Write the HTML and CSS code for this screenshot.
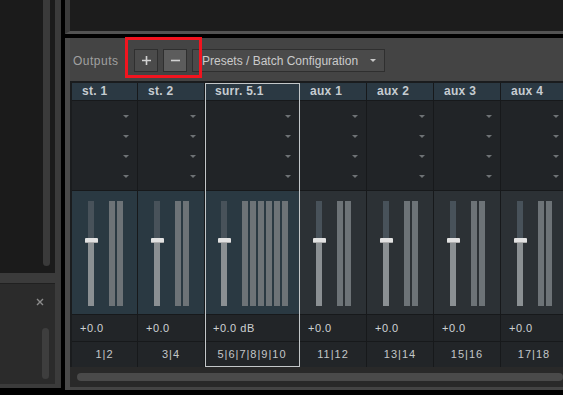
FILE: index.html
```html
<!DOCTYPE html>
<html lang="en">
<head>
    <meta charset="UTF-8">
    <meta name="viewport" content="width=device-width, initial-scale=1.0">
    <title>Outputs</title>
    <link rel="stylesheet" href="styles.css">
</head>
<body>
    <div class="app">
        <!-- Left side panels -->
        <div class="sidebar">
            <div class="side-top">
                <div class="vscroll"></div>
            </div>
            <div class="side-bottom">
                <svg class="close" viewBox="0 0 8 8">
                    <path d="M1 1L7 7M7 1L1 7" stroke="#8c8c8c" stroke-width="1.4" fill="none"/>
                </svg>
                <div class="vscroll"></div>
            </div>
        </div>

        <div class="main">
            <div class="top-pane"></div>

            <!-- Outputs section -->
            <div class="outputs-panel">
                <div class="toolbar">
                    <span class="label">Outputs</span>
                    <div class="btn-group">
                        <button class="btn" title="Add">
                            <svg viewBox="0 0 9 9"><path d="M0 4.5H9M4.5 0V9" stroke="#d2d2d2" stroke-width="1.6"/></svg>
                        </button>
                        <button class="btn active" title="Remove">
                            <svg viewBox="0 0 9 9"><path d="M0 4.5H9" stroke="#d2d2d2" stroke-width="1.6"/></svg>
                        </button>
                    </div>
                    <button class="dropdown">Presets / Batch Configuration <span class="caret"></span></button>
                </div>

                <div class="channels" id="channels"></div>

                <div class="hscroll-area">
                    <div class="hscroll"></div>
                </div>
            </div>
        </div>
    </div>

    <script>
        // Output channel strips
        const channels = [
            { name: "st. 1", value: "+0.0", ports: "1|2", meters: 2 },
            { name: "st. 2", value: "+0.0", ports: "3|4", meters: 2 },
            { name: "surr. 5.1", value: "+0.0 dB", ports: "5|6|7|8|9|10", meters: 6, type: "surround" },
            { name: "aux 1", value: "+0.0", ports: "11|12", meters: 2, type: "aux" },
            { name: "aux 2", value: "+0.0", ports: "13|14", meters: 2, type: "aux" },
            { name: "aux 3", value: "+0.0", ports: "15|16", meters: 2, type: "aux" },
            { name: "aux 4", value: "+0.0", ports: "17|18", meters: 2, type: "aux" }
        ];

        const list = document.getElementById("channels");
        channels.forEach(ch => {
            const col = document.createElement("div");
            col.className = "col" + (ch.type ? " " + ch.type : "");
            const routes = '<div class="route"><span class="arrow"></span></div>'.repeat(4);
            const meters = '<div class="meter"></div>'.repeat(ch.meters);
            col.innerHTML = `
                <div class="head">${ch.name}</div>
                <div class="routes">${routes}</div>
                <div class="fader-cell">
                    <div class="fader">
                        <div class="upper"></div>
                        <div class="knob"></div>
                        <div class="lower"></div>
                    </div>
                    <div class="meters">${meters}</div>
                </div>
                <div class="value">${ch.value}</div>
                <div class="ports">${ch.ports}</div>
            `;
            list.appendChild(col);
        });
    </script>
</body>
</html>
```

FILE: styles.css
```css
* {
    box-sizing: border-box;
}
body {
    margin: 0;
    width: 563px;
    height: 395px;
    overflow: hidden;
    background-color: #000;
    font-family: "Liberation Sans", Arial, sans-serif;
}
.app {
    display: flex;
    gap: 4px;
    height: 395px;
}

/* Sidebar */
.sidebar {
    flex: none;
    width: 61px;
    height: 388px;
    background-color: #3b3b3b;
    display: flex;
    flex-direction: column;
}
.side-top {
    width: 55px;
    height: 273px;
    background-color: #1b1b1b;
    display: flex;
    justify-content: flex-end;
    padding-right: 5px;
}
.vscroll {
    width: 7px;
    background-color: #3a3a3a;
    border-radius: 4px;
}
.side-top .vscroll {
    height: 266px;
    border-radius: 0 0 4px 4px;
}
.side-bottom {
    margin-top: 10px;
    width: 55px;
    height: 101px;
    background-color: #2b2b2b;
    border-top: 1px solid #202020;
    display: flex;
    flex-direction: column;
    align-items: flex-end;
    padding: 14px 6px 0 0;
}
.close {
    width: 8px;
    height: 8px;
    margin-right: 5px;
}
.side-bottom .vscroll {
    height: 51px;
    margin-top: 22px;
    background-color: #3e3e3e;
}

/* Main area */
.main {
    flex: 1;
    min-width: 0;
    display: flex;
    flex-direction: column;
}
.top-pane {
    height: 34px;
    background-color: #1c1c1c;
    border-left: 5px solid #3b3b3b;
    border-bottom: 3px solid #525252;
}
.outputs-panel {
    margin-top: 4px;
    height: 352px;
    background-color: #444;
    border-left: 5px solid #4a4a4a;
    padding-bottom: 3px;
    display: flex;
    flex-direction: column;
}

/* Toolbar */
.toolbar {
    height: 43px;
    padding: 2px 0 0 3px;
    display: flex;
    align-items: center;
}
.label {
    width: 61px;
    font-size: 12px;
    letter-spacing: 0.5px;
    color: #a0a0a0;
}
.btn-group {
    position: relative;
    display: flex;
    gap: 5px;
    margin-right: 5px;
}
.btn-group::after {
    content: "";
    position: absolute;
    left: -9px;
    right: -15px;
    top: -12px;
    bottom: -6px;
    border: 3px solid #f2141f;
    pointer-events: none;
    z-index: 2;
}
.btn {
    width: 24px;
    height: 23px;
    padding: 0;
    background-color: #4b4b4b;
    border: 1px solid #2f2f2f;
    display: flex;
    align-items: center;
    justify-content: center;
}
.btn svg {
    width: 9px;
    height: 9px;
}
.btn.active {
    background-color: #5c5c5c;
}
.dropdown {
    width: 193px;
    height: 23px;
    padding: 0 8px 0 9px;
    background-color: #4a4a4a;
    border: 1px solid #2f2f2f;
    color: #cbcbcb;
    font-family: inherit;
    font-size: 12px;
    display: flex;
    align-items: center;
}
.caret {
    margin-left: auto;
    border-left: 3px solid transparent;
    border-right: 3px solid transparent;
    border-top: 3px solid #c8c8c8;
}

/* Channel strips */
.channels {
    display: flex;
    border-top: 2px solid #1a1c1e;
    border-left: 2px solid #1a1c1e;
    overflow: hidden;
}
.col {
    flex: none;
    width: 67px;
    display: flex;
    flex-direction: column;
    border-right: 1px solid #17191b;
}
.col:first-child {
    width: 66px;
}
.col.surround {
    width: 95px;
    position: relative;
}
.col.surround::after {
    content: "";
    position: absolute;
    top: 0;
    bottom: 0;
    left: 0;
    right: -1px;
    border: 1px solid #c3c7c9;
    pointer-events: none;
}
.head {
    height: 18px;
    padding-left: 10px;
    background-color: #2b3943;
    border-bottom: 1px solid #17191b;
    color: #c6ccd1;
    font-size: 12px;
    font-weight: bold;
    letter-spacing: 0.3px;
    line-height: 17px;
}
.routes {
    height: 90px;
    padding: 5px 8px 0 0;
    background-color: #212427;
    border-bottom: 1px solid #17191b;
    display: flex;
    flex-direction: column;
    align-items: flex-end;
}
.route {
    height: 20px;
    display: flex;
    align-items: center;
}
.arrow {
    border-left: 3px solid transparent;
    border-right: 3px solid transparent;
    border-top: 3px solid #6e7275;
}
.fader-cell {
    height: 124px;
    padding: 10px 0 0 13px;
    background-color: #2a3942;
    border-bottom: 1px solid #17191b;
    display: flex;
}
.col.aux .fader-cell {
    background-color: #2c3135;
}
.fader {
    width: 12px;
    display: flex;
    flex-direction: column;
    align-items: center;
}
.fader .upper {
    width: 6px;
    height: 37px;
    background-color: #48525a;
}
.fader .knob {
    flex: none;
    width: 13px;
    height: 5px;
    background-color: #e2e2e2;
    border-bottom: 1px solid #b0b0b0;
    border-radius: 1px;
}
.fader .lower {
    width: 6px;
    height: 63px;
    background-color: #8b9093;
}
.meters {
    height: 105px;
    margin-left: 12px;
    display: flex;
    gap: 2px;
}
.meter {
    width: 6px;
    background-color: #6d7377;
}
.value {
    height: 27px;
    padding-left: 8px;
    background-color: #222528;
    border-bottom: 1px solid #17191b;
    color: #cfd2d4;
    font-size: 11px;
    letter-spacing: 0.5px;
    line-height: 26px;
}
.ports {
    height: 25px;
    background-color: #222528;
    color: #c4c7c9;
    font-size: 11px;
    letter-spacing: 1px;
    line-height: 25px;
    text-align: center;
}

/* Horizontal scroller */
.hscroll-area {
    height: 20px;
    padding: 6px 0 0 7px;
    background-color: #292929;
}
.hscroll {
    height: 8px;
    background-color: #4a4a4a;
    border-radius: 4px;
}
```
